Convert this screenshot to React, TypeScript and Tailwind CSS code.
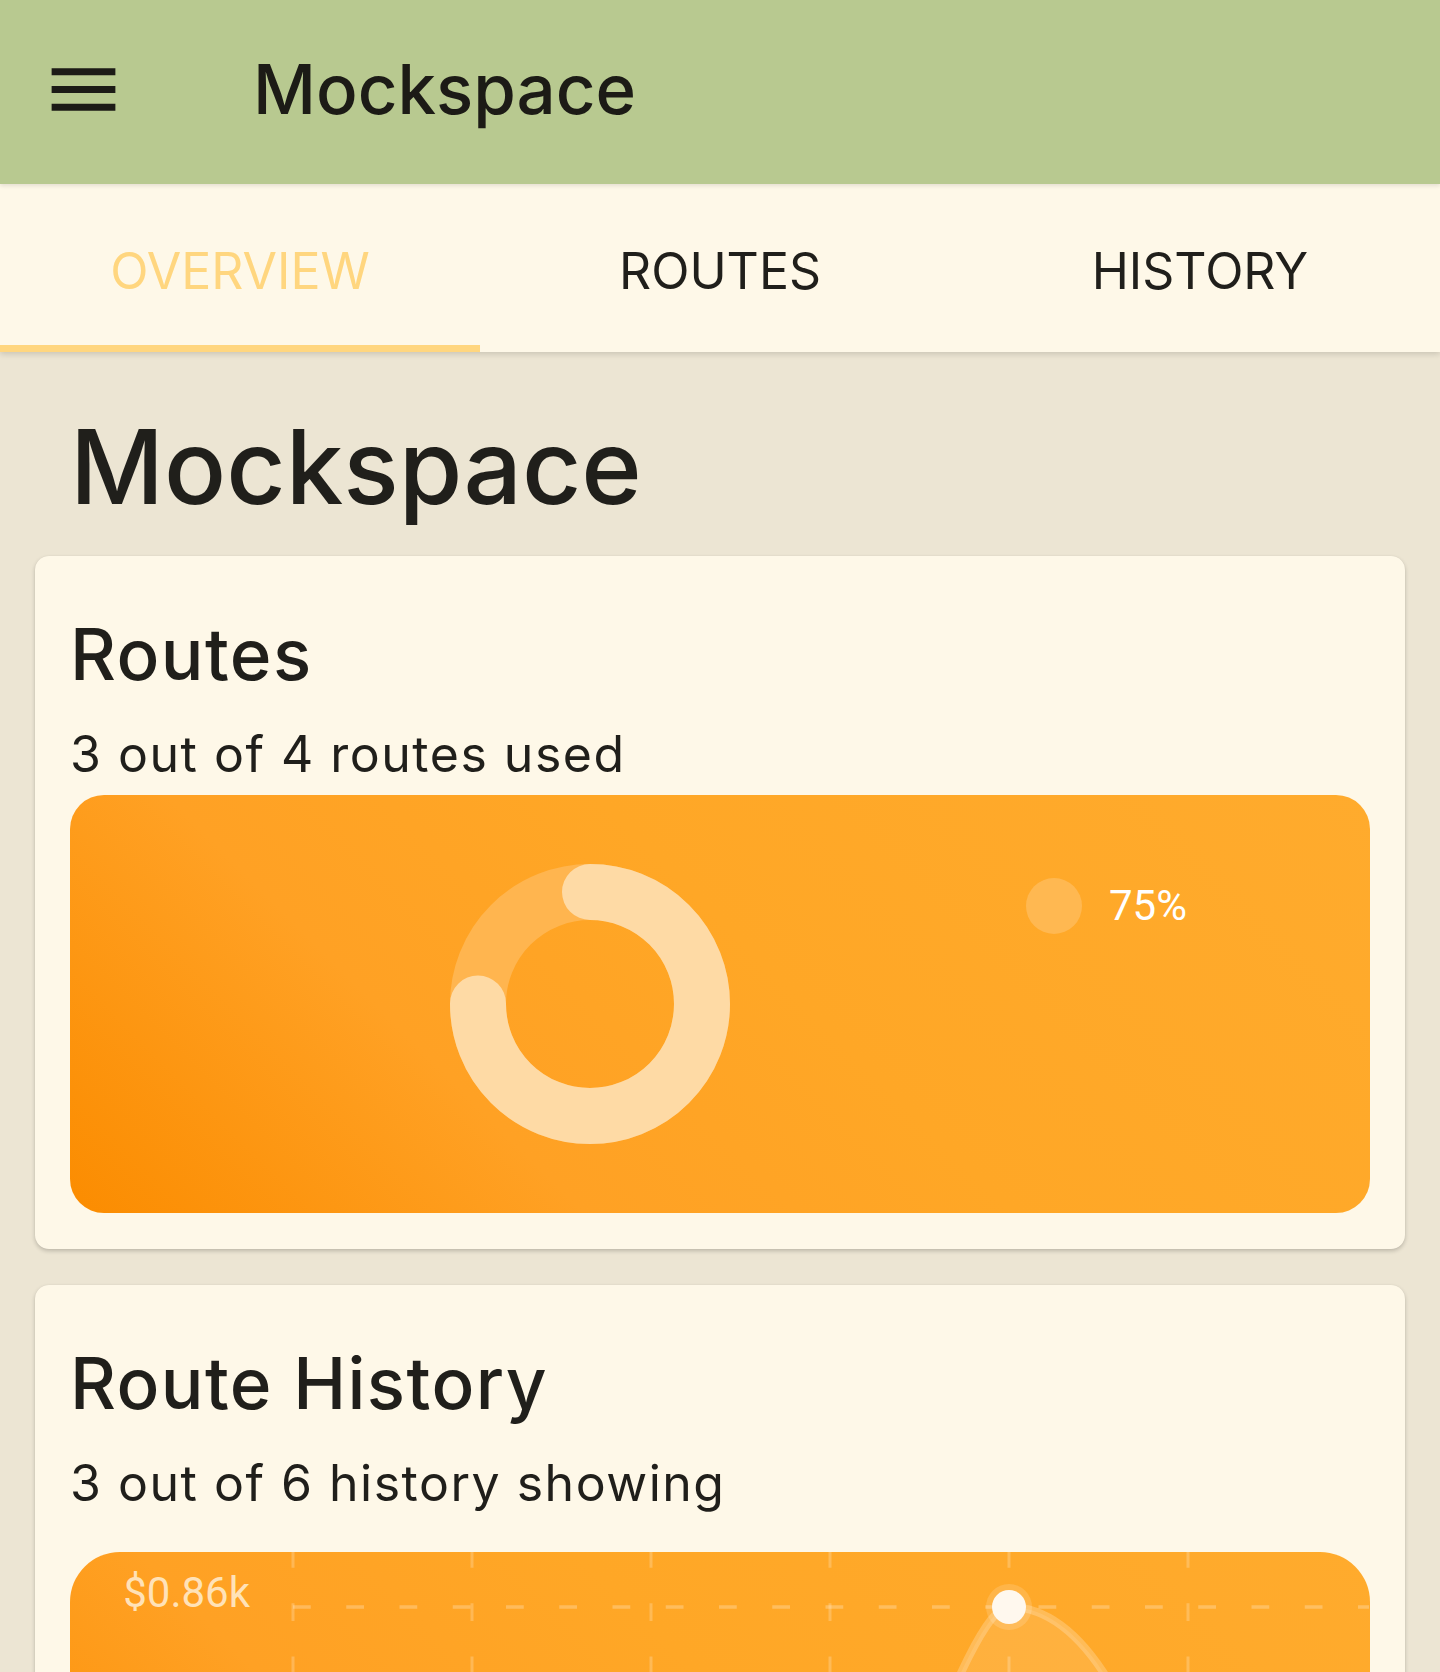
import React from 'react';

const tabs = [
  { label: 'OVERVIEW', active: true },
  { label: 'ROUTES', active: false },
  { label: 'HISTORY', active: false },
];

function MenuIcon() {
  return (
    <svg width="85" height="85" viewBox="0 0 24 24" fill="#1c1b16">
      <path d="M3 18h18v-2H3v2zm0-5h18v-2H3v2zm0-7v2h18V6H3z" />
    </svg>
  );
}

function Donut({ value }: { value: number }) {
  const r = 112;
  const c = 2 * Math.PI * r;
  return (
    <svg width="280" height="280" viewBox="0 0 280 280" className="block">
      <circle cx="140" cy="140" r={r} fill="none" stroke="#ffb54f" strokeWidth="56" />
      <circle
        cx="140"
        cy="140"
        r={r}
        fill="none"
        stroke="#fedaa5"
        strokeWidth="56"
        strokeLinecap="round"
        strokeDasharray={`${c * value} ${c}`}
        transform="rotate(-90 140 140)"
      />
    </svg>
  );
}

// grid x positions line up with the data points
const gridX = [223, 402, 581, 760, 939, 1118];
const curve = 'M760 420 C850 230, 905 55, 939 55 C1020 55, 1080 180, 1118 350';

function HistoryChart() {
  return (
    <svg width="1299" height="460" viewBox="0 0 1299 460" className="block">
      {gridX.map((x) => (
        <line
          key={x}
          x1={x}
          y1={0}
          x2={x}
          y2={460}
          stroke="rgba(255,255,255,0.22)"
          strokeWidth="3"
          strokeDasharray="17.75 35.5"
          strokeDashoffset="2"
        />
      ))}
      <line
        x1="223"
        y1="55"
        x2="1299"
        y2="55"
        stroke="rgba(255,255,255,0.25)"
        strokeWidth="3.5"
        strokeDasharray="17.75 35.5"
      />
      <path d={`${curve} L1118 460 L760 460 Z`} fill="rgba(255,255,255,0.1)" />
      <path d={curve} fill="none" stroke="rgba(255,255,255,0.22)" strokeWidth="8" />
      <circle cx="939" cy="55" r="23" fill="rgba(255,255,255,0.15)" />
      <circle cx="939" cy="55" r="17" fill="#fff8ee" />
      <text x="180" y="55" textAnchor="end" fontFamily="Roboto, sans-serif" fontSize="42" fill="#ffe2b8">
        $0.86k
      </text>
    </svg>
  );
}

export default function App() {
  return (
    <div className="min-h-screen bg-[#ece5d3] font-[Inter,sans-serif] text-[#201f1b]">
      <header className="relative z-20 flex h-[184px] items-center bg-[#b8c990] pb-[6px] pl-[41px] shadow-[0_2px_4px_rgba(0,0,0,0.1)]">
        <MenuIcon />
        <h1 className="ml-[127px] text-[69px] font-medium leading-[86px] text-[#1c1b16]">Mockspace</h1>
      </header>

      <nav className="relative z-10 flex h-[168px] bg-[#fef8e8] shadow-[0_2px_6px_rgba(0,0,0,0.15)]">
        {tabs.map((tab) => (
          <div key={tab.label} className="relative flex flex-1 items-center justify-center pt-[6px]">
            <span
              className={
                tab.active
                  ? 'text-[50px] leading-[60px] text-[#ffd67f]'
                  : 'text-[50px] leading-[60px] text-[#201f1b]'
              }
            >
              {tab.label}
            </span>
            {tab.active && <div className="absolute inset-x-0 bottom-0 h-[7px] bg-[#ffd67f]" />}
          </div>
        ))}
      </nav>

      <main className="px-[35px] pb-10">
        <h2 className="mb-[25px] pl-[35px] pt-[51px] text-[103px] font-medium leading-[128px]">Mockspace</h2>

        <section className="rounded-[14px] bg-[#fef8e8] px-[35px] pb-[36px] pt-[55px] shadow-[0_2px_4px_rgba(0,0,0,0.2),0_0_1px_rgba(0,0,0,0.08)]">
          <h3 className="text-[71px] font-medium leading-[86px] tracking-[0.02em]">Routes</h3>
          <p className="mt-[27px] text-[50px] leading-[60px] tracking-[0.03em]">3 out of 4 routes used</p>
          <div className="mt-[11px] flex h-[418px] items-start rounded-[34px] bg-[linear-gradient(45deg,#fb8c00_0%,#ffa124_30%,#ffa726_55%,#ffab2d_100%)]">
            <div className="ml-[380px] mt-[69px]">
              <Donut value={0.75} />
            </div>
            <div className="ml-[296px] mt-[83px] flex items-center">
              <span className="h-[56px] w-[56px] rounded-full bg-[#ffb851]" />
              <span className="ml-[27px] font-[Roboto,sans-serif] text-[42px] leading-[50px] text-white">75%</span>
            </div>
          </div>
        </section>

        <section className="mt-[36px] rounded-[14px] bg-[#fef8e8] px-[35px] pb-[35px] pt-[55px] shadow-[0_2px_4px_rgba(0,0,0,0.2),0_0_1px_rgba(0,0,0,0.08)]">
          <h3 className="text-[71px] font-medium leading-[86px] tracking-[0.02em]">Route History</h3>
          <p className="mt-[27px] text-[50px] leading-[60px] tracking-[0.03em]">3 out of 6 history showing</p>
          <div className="mt-[39px] overflow-hidden rounded-[50px] bg-[linear-gradient(45deg,#fb8c00_0%,#ffa124_30%,#ffa726_55%,#ffab2d_100%)]">
            <HistoryChart />
          </div>
        </section>
      </main>
    </div>
  );
}
